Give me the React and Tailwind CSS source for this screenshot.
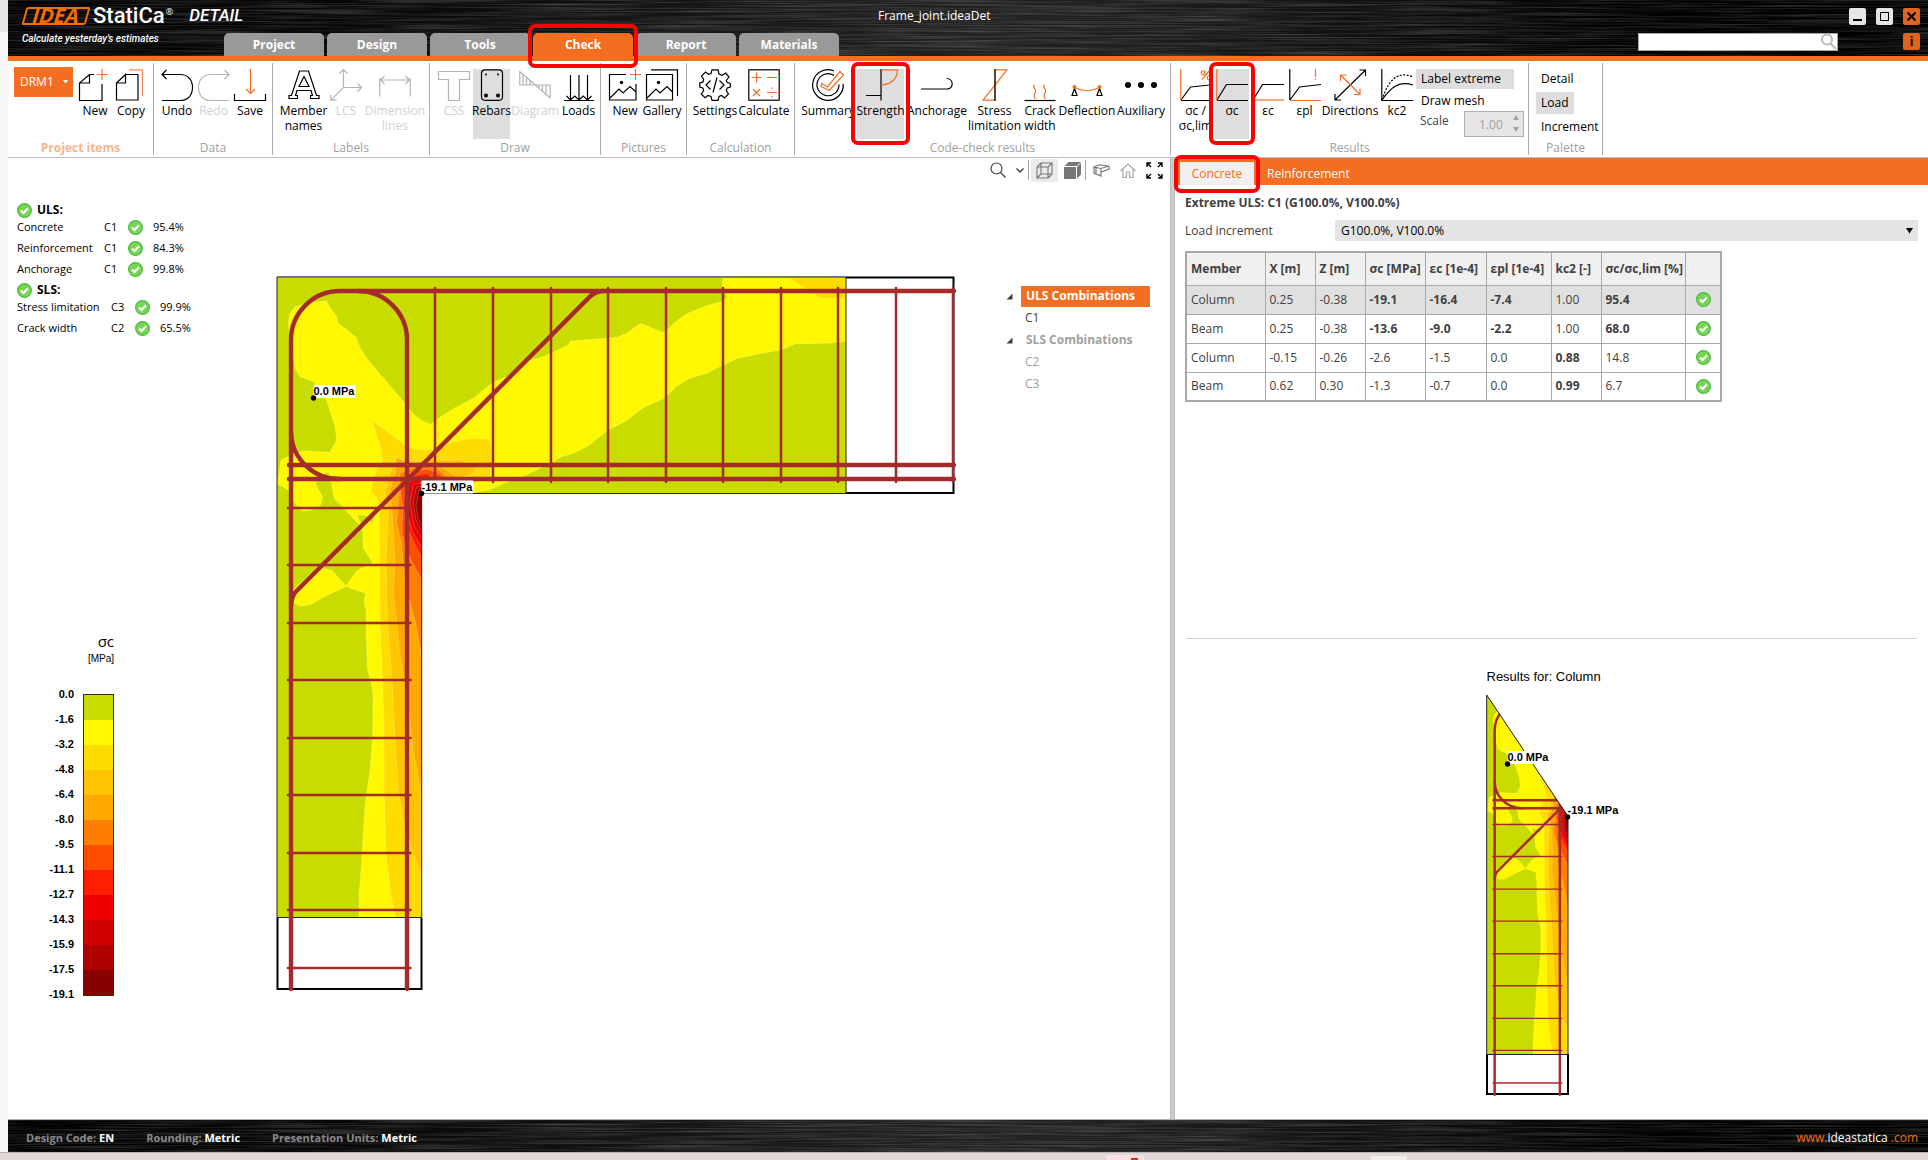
import React, { useState } from 'react';

const STRESS_SCALE = [
  { value: '-1.6', color: '#c8dc00' },
  { value: '-3.2', color: '#fff800' },
  { value: '-4.8', color: '#ffdc00' },
  { value: '-6.4', color: '#ffc400' },
  { value: '-8.0', color: '#ffa800' },
  { value: '-9.5', color: '#ff7d00' },
  { value: '-11.1', color: '#ff4d00' },
  { value: '-12.7', color: '#ff1e00' },
  { value: '-14.3', color: '#f20000' },
  { value: '-15.9', color: '#d00000' },
  { value: '-17.5', color: '#b00000' },
  { value: '-19.1', color: '#880000' },
];

// Contour bands of the stress field, drawn on a grid three times finer than the model
const BANDS = [
  {
    color: '#fff800',
    points:
      '85,185 90,160 105,140 150,128 200,122 205,135 230,170 233,188 262,210 288,232 300,262 320,295 380,365 435,430 460,462 485,482 512,493 540,472 585,443 640,415 700,366 740,350 780,320 805,303 850,290 925,255 932,243 1000,238 1070,232 1100,220 1142,190 1207,217 1217,215 1243,188 1279,162 1336,138 1383,125 1403,113 1398,100 1386,80 1390,50 1757,50 1757,245 1703,250 1605,252 1563,270 1481,285 1434,295 1383,318 1341,340 1290,355 1248,380 1217,413 1150,443 1095,485 1045,510 985,557 940,580 905,590 870,610 800,645 720,675 690,690 640,698 485,700 485,1973 297,1973 297,1906 305,1803 315,1638 320,1597 330,1535 338,1431 339,1307 335,1276 322,1225 318,1121 318,1050 312,1025 316,1000 258,980 190,1012 150,1035 120,1038 103,1030 98,990 125,965 170,922 215,930 258,978 290,932 338,908 310,865 308,805 270,765 222,715 213,660 205,635 170,650 168,675 188,710 182,735 150,752 125,752 100,725 85,690 53,672 62,600 95,585 130,572 210,577 230,540 225,500 200,420 160,365 120,350 105,325 100,290 90,250',
  },
  { color: '#c8dc00', points: '292,764 345,770 335,790 320,782 300,788' },
  {
    color: '#ffdc00',
    points:
      '338,482 400,528 435,555 470,570 540,565 570,550 625,535 680,537 692,545 694,600 690,650 640,672 485,700 485,1973 407,1973 392,1906 378,1783 372,1597 372,1390 367,1256 360,1080 357,750 350,712 332,695 345,640 368,600 360,555 350,530',
  },
  { color: '#ffdc00', points: '1581,50 1682,115 1757,116 1757,50' },
  {
    color: '#ffc400',
    points:
      '410,592 440,603 500,600 600,600 640,615 650,633 625,648 485,700 485,1845 460,1783 435,1700 415,1597 405,1431 395,1235 382,1080 378,900 385,760 375,695 395,625',
  },
  {
    color: '#ffa800',
    points:
      '410,592 440,610 485,606 540,617 590,650 485,700 485,1607 460,1473 445,1338 420,1183 410,1080 400,1000 405,900 398,780 390,690 405,640',
  },
  {
    color: '#ff7d00',
    points:
      '420,640 440,630 480,616 530,625 560,650 485,700 485,1190 465,1080 440,990 430,910 425,850 410,790 418,690',
  },
  { color: '#ff4d00', points: '430,650 470,632 500,628 530,636 550,652 485,700 485,960 448,890 426,820 428,740 422,700' },
  { color: '#ff1e00', points: '440,660 470,645 500,640 520,655 485,700 485,895 460,845 436,790 430,730' },
  { color: '#f20000', points: '447,665 480,655 485,700 485,862 455,810 437,735' },
  { color: '#d00000', points: '460,672 485,670 485,835 462,795 450,730' },
  { color: '#b00000', points: '470,680 485,680 485,815 468,780 459,730' },
  { color: '#880000', points: '478,690 485,690 485,795 475,775 468,735' },
];

const BEAM_STIRRUPS = [435, 493, 551, 608, 666, 723, 781, 838, 896, 953];
const COLUMN_STIRRUPS = [508, 565, 623, 680, 738, 795, 853, 910, 968];

const CHECKS = [
  {
    name: 'ULS:',
    grid: 'grid-cols-[87px_24px_25px_1fr]',
    rows: [
      ['Concrete', 'C1', '95.4%'],
      ['Reinforcement', 'C1', '84.3%'],
      ['Anchorage', 'C1', '99.8%'],
    ],
  },
  {
    name: 'SLS:',
    grid: 'grid-cols-[94px_24px_25px_1fr]',
    rows: [
      ['Stress limitation', 'C3', '99.9%'],
      ['Crack width', 'C2', '65.5%'],
    ],
  },
];

const COLUMNS = [
  { label: 'Member', width: 'w-[79px]' },
  { label: 'X [m]', width: 'w-[50px]' },
  { label: 'Z [m]', width: 'w-[50px]' },
  { label: 'σc [MPa]', width: 'w-[60px]' },
  { label: 'εc [1e-4]', width: 'w-[61px]' },
  { label: 'εpl [1e-4]', width: 'w-[65px]' },
  { label: 'kc2 [-]', width: 'w-[50px]' },
  { label: 'σc/σc,lim [%]', width: 'w-[84px]' },
];

const RESULTS = [
  { cells: ['Column', '0.25', '-0.38', '-19.1', '-16.4', '-7.4', '1.00', '95.4'], bold: [3, 4, 5, 7] },
  { cells: ['Beam', '0.25', '-0.38', '-13.6', '-9.0', '-2.2', '1.00', '68.0'], bold: [3, 4, 5, 7] },
  { cells: ['Column', '-0.15', '-0.26', '-2.6', '-1.5', '0.0', '0.88', '14.8'], bold: [6] },
  { cells: ['Beam', '0.62', '0.30', '-1.3', '-0.7', '0.0', '0.99', '6.7'], bold: [6] },
];

const ORANGE = '#f36e21';

function Brushed({ id }) {
  return (
    <svg className="absolute inset-0 w-full h-full" preserveAspectRatio="none" aria-hidden="true">
      <defs>
        <filter id={id} x="0" y="0" width="100%" height="100%">
          <feTurbulence type="fractalNoise" baseFrequency="0.008 0.7" numOctaves="3" seed="4" />
          <feColorMatrix values="0 0 0 0 1  0 0 0 0 1  0 0 0 0 1  1.6 0 0 0 -0.6" />
        </filter>
        <linearGradient id={`${id}-shade`}>
          <stop offset="0" stopColor="#000" />
          <stop offset="0.25" stopColor="#0c0c0c" />
          <stop offset="0.5" stopColor="#222" />
          <stop offset="0.62" stopColor="#1a1a1a" />
          <stop offset="0.85" stopColor="#000" />
        </linearGradient>
      </defs>
      <rect width="100%" height="100%" fill={`url(#${id}-shade)`} />
      <rect width="100%" height="100%" filter={`url(#${id})`} opacity="0.25" />
    </svg>
  );
}

function CheckBadge() {
  return (
    <svg width="15" height="15" viewBox="0 0 15 15" fill="none" className="block shrink-0">
      <circle cx="7.5" cy="7.5" r="6.9" fill="#76d552" stroke="#4fb948" strokeWidth="1.2" />
      <path d="M4 7.6 6.6 10 11 5.2" stroke="#fff" strokeWidth="2.2" />
    </svg>
  );
}

function Highlight({ className }) {
  return <span className={`absolute border-4 border-[#ff0000] rounded-[7px] z-20 pointer-events-none ${className}`} />;
}

function Icon({ children, color = '#000' }) {
  return (
    <svg
      width="32"
      height="32"
      viewBox="0 0 32 32"
      fill="none"
      stroke={color}
      strokeWidth="1.2"
      className="block shrink-0 overflow-visible"
      aria-hidden="true"
    >
      {children}
    </svg>
  );
}

const GREY = '#b4b4b4';

const icons = {
  newItem: (
    <Icon>
      <path d="M15 5.500H10.500L.5 14V31.500H23V15M10.500 5.500V14H.5" />
      <path d="M23 0V11M17.500 5.500H28.500" stroke={ORANGE} />
    </Icon>
  ),
  copy: (
    <Icon>
      <path d="M10.500 5.500H23V31H1.500V14L10.500 5.500V14H1.500" />
      <path d="M14 .8H27.500V27" stroke="#f58f55" />
    </Icon>
  ),
  undo: (
    <Icon>
      <path d="M1 5.500H19C27 5.500 31.500 11 31.500 18.500S27 31.500 19 31.500H1M5.500 1 1 5.500 5.500 10" />
    </Icon>
  ),
  redo: (
    <Icon color={GREY}>
      <path d="M31 5.500H13C5 5.500 .5 11 .5 18.500S5 31.500 13 31.500H31M26.500 1 31 5.500 26.500 10" />
    </Icon>
  ),
  save: (
    <Icon>
      <path d="M.5 25V31.500H31.500V25" />
      <path d="M16.500 0V24.500M12 20 16.500 24.500 21 20" stroke={ORANGE} />
    </Icon>
  ),
  member: (
    <Icon>
      <path d="M1 29.500V26.500H3.500L11.500 2H20.500L28.500 26.500H31V29.500H22.500V26.500H24.500L23 21.500H9L7.500 26.500H9.500V29.500ZM11 17.500H21L16 7.500Z" />
    </Icon>
  ),
  lcs: (
    <Icon color={GREY}>
      <path d="M13.500 .5V18.500H31.500M13.500 18.500 .8 31.200M9.500 4.500 13.500 .5 17.500 4.500M27.500 14.500 31.500 18.500 27.500 22.500M.8 26V31.200H6.500" />
    </Icon>
  ),
  dimension: (
    <Icon color={GREY}>
      <path d="M.8 9V27.500M31.200 9V27.500M1.500 11H30.500M5.500 7 1.500 11 5.500 15M26.500 7 30.500 11 26.500 15" />
    </Icon>
  ),
  css: (
    <Icon color={GREY}>
      <path d="M.5 2.500H31.500V10.500H21.500V31.500H10.500V10.500H.5Z" />
    </Icon>
  ),
  rebars: (
    <Icon>
      <rect x="5.500" y=".8" width="21" height="30.500" rx="3.500" />
      <g fill="#000" stroke="none">
        <circle cx="10" cy="5.500" r="1" />
        <circle cx="22" cy="5.500" r="1" />
        <circle cx="10" cy="26.500" r="2" />
        <circle cx="22" cy="26.500" r="2" />
      </g>
    </Icon>
  ),
  diagram: (
    <Icon color={GREY}>
      <path d="M.8 16V2.500L31.200 29V16ZM4 6V16M7.500 9V16M11 12V16M20 16V19M23.500 16V22M27 16V25" />
    </Icon>
  ),
  loads: (
    <Icon>
      <path d="M1 31.500H31M7.500 6V31M16 6V31M24.500 6V31M3.500 27 7.500 31 11.700 27 16 31 20.200 27 24.500 31 28.500 27" />
    </Icon>
  ),
  picture: (
    <Icon>
      <path d="M17 5.500H.5V31H27V15M.5 29.500 10 20 14 24 21 17.500 27 23" />
      <circle cx="12.500" cy="13.500" r="1.700" fill="#000" stroke="none" />
      <path d="M26.500 0V11M21 5.500H32" stroke={ORANGE} />
    </Icon>
  ),
  gallery: (
    <Icon>
      <path d="M.5 5.500H26.500V31H.5ZM5 .8H31.500V27M.5 29.500 10 20 14 24 21 17.500 26.500 23" />
      <circle cx="12.500" cy="13.500" r="1.700" fill="#000" stroke="none" />
    </Icon>
  ),
  settings: (
    <Icon>
      <path d="M13 .8H19L20 5 23 6.300 26.700 4 30 8 27.300 11.500 28.200 13.500 31.300 14.500V18L28.200 19 27.300 21.500 29.500 25 25.500 29 22.500 26.500 20 27.500 19 31.300H13L12 27.500 9 26.500 6 28.700 2.300 25 4.700 21.500 3.800 19 .8 18V14L3.800 13.200 4.700 10.500 2.500 7 6.500 3 9.500 5.300 12 4.500Z" />
      <path d="M11.500 11.500 7 16 11.500 20.500M20.500 11.500 25 16 20.500 20.500M18 8.500 14 23.500" />
    </Icon>
  ),
  calculate: (
    <Icon>
      <rect x=".8" y=".8" width="30.400" height="30.400" />
      <path
        d="M3.500 8.500H13.500M8.500 3.500V13.500M19 8.500H29M5 20 12 27M12 20 5 27M19 23.500H29M24 18.500V20M24 27V28.500"
        stroke={ORANGE}
      />
    </Icon>
  ),
  summary: (
    <Icon>
      <path d="M22 2A15.300 15.300 0 1 0 31.200 15M22 6.500A11 11 0 1 0 27 15.500" />
      <path d="M9.500 14.500 15.500 18 28 2.500 31.500 6 17 21.500 9 17.500Z" stroke={ORANGE} />
    </Icon>
  ),
  strength: (
    <Icon>
      <path d="M16 0V31.500M1 26.500H16" stroke="#000" />
      <path d="M16.500 .8H32.500C32.500 9 27 15.500 16.500 16" stroke={ORANGE} />
    </Icon>
  ),
  anchorage: (
    <Icon>
      <path d="M0 20H26C33 20 33 9.500 25.500 9.500" />
    </Icon>
  ),
  stress: (
    <Icon>
      <path d="M28 .8 4 31.200H16V.8Z" stroke={ORANGE} />
      <path d="M16 0V32" />
    </Icon>
  ),
  crack: (
    <Icon>
      <path d="M.5 31.500H31.500" />
      <path
        d="M10.500 16C7.500 19 13 20 11.500 23S9.500 27 11.500 30M20.500 16C17.500 19 23 20 21.500 23S19.500 27 21.500 30"
        stroke={ORANGE}
      />
    </Icon>
  ),
  deflection: (
    <Icon>
      <path d="M3.500 19.500 1 26.500H6ZM28.500 19.500 26 26.500H31Z" />
      <path d="M3.500 18.500Q16 25 28.500 18.500" stroke={ORANGE} />
      <circle cx="3.500" cy="18" r="2" fill={ORANGE} stroke="none" />
      <circle cx="28.500" cy="18" r="2" fill={ORANGE} stroke="none" />
    </Icon>
  ),
  auxiliary: (
    <Icon>
      <g fill="#000" stroke="none">
        <circle cx="3" cy="16" r="3" />
        <circle cx="16" cy="16" r="3" />
        <circle cx="29" cy="16" r="3" />
      </g>
    </Icon>
  ),
  stressRatio: (
    <Icon>
      <path d="M1 31 10.500 18 30 16M1 31.500H31" />
      <path d="M.8 0V31.500" stroke={ORANGE} />
      <path d="M30 1 22 10.500M23 1.500A1.800 2.200 0 1 0 23.100 1.500M29 6.500A1.800 2.200 0 1 0 29.100 6.500" stroke={ORANGE} />
    </Icon>
  ),
  stressCurve: (
    <Icon>
      <path d="M1 31 10.500 15.500H32M1 31.500H32" />
      <path d="M.8 0V31.500" stroke={ORANGE} />
    </Icon>
  ),
  strainCurve: (
    <Icon>
      <path d="M1 31 10.500 15.500H32" />
      <path d="M.5 31H32" stroke="#f9a780" strokeWidth="2" />
    </Icon>
  ),
  plasticStrain: (
    <Icon>
      <path d="M.8 0V31M1 31 10.500 18 32 15.500" />
      <path d="M1 31.500H32M26.500 0V8M26.500 9.500V11" stroke={ORANGE} />
    </Icon>
  ),
  directions: (
    <Icon>
      <path d="M1 31 31.500 1M25.500 1H31.500V7M1 25V31H7" />
      <path d="M6.500 6 26 25.500M6.500 12V6H12.500M26 19.500V25.500H20" stroke={ORANGE} />
    </Icon>
  ),
  kc2: (
    <Icon>
      <path d="M.8 0V31.500H32M1 31C10 18 18 11.500 32 16" />
      <path d="M1 31C7 12 16 1 32 8" strokeDasharray="2 1.500" />
    </Icon>
  ),
};

function Tool({ icon, label, width, active, disabled, marked }) {
  return (
    <button
      disabled={disabled}
      className={`relative flex flex-col items-center shrink-0 h-[70px] leading-[15px] ${width} ${
        active ? 'bg-[#dedede] ml-px z-10' : ''
      } ${disabled ? 'text-[#cfcfcf]' : 'text-black'}`}
    >
      {icons[icon]}
      <span className="mt-[2px] text-center whitespace-pre">{label}</span>
      {marked && <Highlight className="-inset-x-[6px] -top-[7px] -bottom-[6px]" />}
    </button>
  );
}

function ToolGroup({ name, width, padding, bold, children }) {
  return (
    <section className={`flex flex-col justify-between shrink-0 border-r border-[#ababab] h-[92px] pt-[6px] ${width}`}>
      <div className={`flex items-start ${padding}`}>{children}</div>
      <h2 className={`text-center leading-[14px] ${bold ? 'font-bold text-[#f8b48e]' : 'text-[#a0a0a0]'}`}>{name}</h2>
    </section>
  );
}

function Header() {
  const [tab, setTab] = useState('Check');
  const tabs = ['Project', 'Design', 'Tools', 'Check', 'Report', 'Materials'];

  return (
    <header className="relative h-[61px] border-b-[5px] border-[#f36e21] bg-black">
      <Brushed id="brushed-top" />
      <div className="relative grid grid-cols-[215px_1fr_290px] h-full">
        <div className="pl-[14px] pt-[6px] text-white">
          <div className="flex items-center h-[20px] whitespace-nowrap">
            <span className="flex items-center justify-center shrink-0 w-[64px] h-[18px] ml-[2px] mr-[5px] -skew-x-[16deg] border-2 border-[#f36e00] rounded-[2px] font-['Open_Sans',sans-serif] text-[20px] leading-[16px] font-bold text-[#f36e00]">
              IDEA
            </span>
            <span className="shrink-0 font-['Roboto',sans-serif] font-medium text-[22px] leading-[20px]">StatiCa</span>
            <span className="shrink-0 self-start ml-px text-[9px] leading-[12px]">®</span>
            <span className="shrink-0 ml-[16px] font-['Roboto',sans-serif] italic font-medium text-[17px]">DETAIL</span>
          </div>
          <p className="mt-[6px] font-['Roboto',sans-serif] italic font-medium text-[10px] leading-[14px] whitespace-nowrap">
            Calculate yesterday's estimates
          </p>
        </div>

        <div className="flex flex-col justify-between">
          <h1 className="pt-[8px] pl-[655px] text-white leading-[16px] whitespace-nowrap">Frame_joint.ideaDet</h1>
          <nav className="flex gap-[3px] pl-px">
            {tabs.map((name) => (
              <button
                key={name}
                onClick={() => setTab(name)}
                className={`relative w-[100px] h-[23px] rounded-t-[5px] text-white font-bold ${
                  tab === name ? 'bg-[#f36e21]' : 'bg-[#999999]'
                }`}
              >
                {name}
                {name === 'Check' && <Highlight className="-inset-x-[5px] -top-[9px] -bottom-[12px]" />}
              </button>
            ))}
          </nav>
        </div>

        <div className="flex flex-col items-end gap-[8px] pt-[8px] pr-[8px]">
          <div className="flex gap-[10px]">
            <button aria-label="Minimize" className="w-[17px] h-[17px] rounded-[2px] bg-[#e6e6e6] flex items-end justify-center pb-[4px]">
              <span className="w-[9px] h-[2px] bg-black" />
            </button>
            <button aria-label="Maximize" className="w-[17px] h-[17px] rounded-[2px] bg-[#e6e6e6] flex items-center justify-center">
              <span className="w-[9px] h-[9px] border border-black" />
            </button>
            <button aria-label="Close" className="w-[17px] h-[17px] rounded-[2px] bg-[#df6420] flex items-center justify-center">
              <svg width="9" height="9" viewBox="0 0 9 9" stroke="#000" strokeWidth="2">
                <path d="M.5.5 8.500 8.500M8.500.5.5 8.500" />
              </svg>
            </button>
          </div>
          <div className="flex gap-[65px]">
            <label className="relative block">
              <input
                type="text"
                aria-label="Search"
                className="block w-[200px] h-[18px] bg-white border border-[#a8a8b0] pl-1 pr-5 text-black"
              />
              <svg
                width="17"
                height="17"
                viewBox="0 0 17 17"
                fill="none"
                stroke="#bdbdbd"
                strokeWidth="2.200"
                className="absolute right-px top-0"
              >
                <circle cx="7" cy="6.500" r="5" />
                <path d="M10.500 10.500 16 16" />
              </svg>
            </label>
            <button aria-label="Info" className="w-[17px] h-[17px] rounded-[2px] bg-[#df6420] text-black font-bold leading-[16px]">
              i
            </button>
          </div>
        </div>
      </div>
    </header>
  );
}

function Ribbon() {
  const [labelExtreme, setLabelExtreme] = useState(true);
  return (
    <div className="flex h-[97px] pt-[2px] bg-white border-b border-[#c0c0c0]">
      <ToolGroup name="Project items" width="w-[146px]" padding="pl-[6px]" bold>
        <button className="flex items-center justify-between w-[59px] h-[30px] -mt-[2px] pl-[6px] pr-[5px] mr-[4px] bg-[#f36e21] text-white">
          DRM1
          <svg width="5" height="4" viewBox="0 0 5 4" fill="#fff">
            <path d="M0 0H5L2.500 3.500Z" />
          </svg>
        </button>
        <Tool icon="newItem" label="New" width="w-[36px]" />
        <Tool icon="copy" label="Copy" width="w-[36px]" />
      </ToolGroup>

      <ToolGroup name="Data" width="w-[119px]" padding="pl-[5px]">
        <Tool icon="undo" label="Undo" width="w-[36px]" />
        <Tool icon="redo" label="Redo" width="w-[37px]" disabled />
        <Tool icon="save" label="Save" width="w-[36px]" />
      </ToolGroup>

      <ToolGroup name="Labels" width="w-[157px]" padding="pl-[6px]">
        <Tool icon="member" label={'Member\nnames'} width="w-[49px]" />
        <Tool icon="lcs" label="LCS" width="w-[36px]" disabled />
        <Tool icon="dimension" label={'Dimension\nlines'} width="w-[62px]" disabled />
      </ToolGroup>

      <ToolGroup name="Draw" width="w-[171px]" padding="pl-[6px]">
        <Tool icon="css" label="CSS" width="w-[36px]" disabled />
        <Tool icon="rebars" label="Rebars" width="w-[37px]" active />
        <Tool icon="diagram" label="Diagram" width="w-[50px]" disabled />
        <Tool icon="loads" label="Loads" width="w-[37px]" />
      </ToolGroup>

      <ToolGroup name="Pictures" width="w-[86px]" padding="pl-[6px]">
        <Tool icon="picture" label="New" width="w-[36px]" />
        <Tool icon="gallery" label="Gallery" width="w-[38px]" />
      </ToolGroup>

      <ToolGroup name="Calculation" width="w-[108px]" padding="pl-[3px]">
        <Tool icon="settings" label="Settings" width="w-[50px]" />
        <Tool icon="calculate" label="Calculate" width="w-[48px]" />
      </ToolGroup>

      <ToolGroup name="Code-check results" width="w-[376px]" padding="pl-[5px]">
        <Tool icon="summary" label="Summary" width="w-[56px]" />
        <Tool icon="strength" label="Strength" width="w-[47px]" active marked />
        <Tool icon="anchorage" label="Anchorage" width="w-[66px]" />
        <Tool icon="stress" label={'Stress\nlimitation'} width="w-[49px]" />
        <Tool icon="crack" label={'Crack\nwidth'} width="w-[42px]" />
        <Tool icon="deflection" label="Deflection" width="w-[52px]" />
        <Tool icon="auxiliary" label="Auxiliary" width="w-[56px]" />
      </ToolGroup>

      <ToolGroup name="Results" width="w-[358px]" padding="pl-[6px]">
        <Tool icon="stressRatio" label={'σc /\nσc,lim'} width="w-[37px]" />
        <Tool icon="stressCurve" label="σc" width="w-[34px]" active marked />
        <Tool icon="strainCurve" label="εc" width="w-[38px]" />
        <Tool icon="plasticStrain" label="εpl" width="w-[35px]" />
        <Tool icon="directions" label="Directions" width="w-[56px]" />
        <Tool icon="kc2" label="kc2" width="w-[38px]" />
        <div className="flex flex-col items-start w-[108px]">
          <button
            onClick={() => setLabelExtreme(!labelExtreme)}
            className={`w-[98px] h-[20px] pl-[5px] text-left text-black ${labelExtreme ? 'bg-[#dedede]' : ''}`}
          >
            Label extreme
          </button>
          <button className="h-[20px] mt-[2px] pl-[5px] text-left text-black">Draw mesh</button>
          <div className="flex justify-between w-full pl-[4px]">
            <label htmlFor="scale" className="leading-[20px] text-[#444444]">
              Scale
            </label>
            <span className="relative">
              <input
                id="scale"
                disabled
                defaultValue="1.00"
                className="block w-[60px] h-[26px] border border-[#b0b0b0] bg-[#e6e6e6] pl-[14px] text-[#a0a0a0]"
              />
              <svg width="6" height="18" viewBox="0 0 6 18" fill="#a0a0a0" className="absolute right-[5px] top-[4px]">
                <path d="M3 0 6 5H0ZM3 17 0 12H6Z" />
              </svg>
            </span>
          </div>
        </div>
      </ToolGroup>

      <ToolGroup name="Palette" width="w-[74px]" padding="pl-[7px]">
        <div className="flex flex-col items-start gap-[2px] -mt-px text-black">
          <button className="h-[22px] px-[5px]">Detail</button>
          <button className="h-[22px] px-[5px] bg-[#dedede]">Load</button>
          <button className="h-[22px] px-[5px]">Increment</button>
        </div>
      </ToolGroup>
    </div>
  );
}

function ViewToolbar() {
  return (
    <div className="flex items-center justify-end h-[24px] pr-[7px] text-[#777777]">
      <button aria-label="Zoom" className="flex items-center gap-[10px] mr-[4px]">
        <svg width="16" height="16" viewBox="0 0 16 16" fill="none" stroke="#444" strokeWidth="1.200">
          <circle cx="6.500" cy="6.500" r="5.500" />
          <path d="M10.500 10.500 15.500 15.500" />
        </svg>
        <svg width="8" height="5" viewBox="0 0 8 5" fill="none" stroke="#444" strokeWidth="1.500">
          <path d="M.5.5 4 4 7.500.5" />
        </svg>
      </button>
      <span className="w-px h-[20px] bg-[#a8a8a8] mr-[2px]" />
      <button aria-label="Wireframe view" className="flex items-center justify-center w-[27px] h-[23px] bg-[#ebebeb] mr-[6px]">
        <svg width="17" height="17" viewBox="0 0 17 17" fill="none" stroke="#777" strokeWidth="1.100">
          <path d="M1 5H12V16H1ZM5 1H16V12H5ZM1 5 5 1M12 5 16 1M12 16 16 12M1 16 5 12" />
        </svg>
      </button>
      <button aria-label="Solid view" className="mr-[4px]">
        <svg width="17" height="17" viewBox="0 0 17 17" fill="#777">
          <path d="M0 5H12V17H0ZM.5 4 4.500 0H17L13 4ZM13 5 17 1V12.500L13 16.500Z" />
        </svg>
      </button>
      <span className="w-px h-[20px] bg-[#a8a8a8] mr-[7px]" />
      <button aria-label="Perspective" className="mr-[10px]">
        <svg width="17" height="13" viewBox="0 0 17 13" fill="none" stroke="#777" strokeWidth="1.200">
          <path d="M1 3 6 .8 16 2 8 4.500ZM1 3V9L8 12V4.500M8 8 16 5V2M3 4V10" />
        </svg>
      </button>
      <button aria-label="Home" className="mr-[10px]">
        <svg width="16" height="15" viewBox="0 0 16 15" fill="none" stroke="#aaa" strokeWidth="1.200">
          <path d="M.5 8 8 1 15.500 8M3 6V14.300H6.500V9H9.500V14.300H13V6" />
        </svg>
      </button>
      <button aria-label="Fit to screen">
        <svg width="17" height="17" viewBox="0 0 17 17" fill="none" stroke="#000" strokeWidth="1.400">
          <path d="M1 5V1H5M12 1H16V5M16 12V16H12M5 16H1V12M1 1 5 5M16 1 12 5M16 16 12 12M1 16 5 12" />
        </svg>
      </button>
    </div>
  );
}

function CheckSummary() {
  return (
    <div className="flex flex-col gap-[3px] pl-[9px] pt-[21px] text-[11px] text-black">
      {CHECKS.map((group) => (
        <div key={group.name}>
          <div className="flex items-center gap-[5px] h-[14px] text-[12px] font-bold">
            <CheckBadge />
            {group.name}
          </div>
          {group.rows.map(([name, combination, ratio]) => (
            <div key={name} className={`grid items-center h-[21px] whitespace-nowrap ${group.grid}`}>
              <span>{name}</span>
              <span>{combination}</span>
              <CheckBadge />
              <span>{ratio}</span>
            </div>
          ))}
        </div>
      ))}
    </div>
  );
}

function StressLegend() {
  return (
    <div className="w-[106px] mt-[290px] flex flex-col items-end">
      <div className="text-[15px] leading-[24px] text-black">σc</div>
      <div className="font-['Liberation_Sans',sans-serif] text-[10px] leading-[12px] text-black">[MPa]</div>
      <div className="flex gap-[9px] mt-[17px] font-['Liberation_Sans',sans-serif] font-bold text-[11px] text-black">
        <div className="flex flex-col text-right">
          <span className="h-[25px] leading-[25px]">0.0</span>
          {STRESS_SCALE.map((step) => (
            <span key={step.value} className="h-[25px] leading-[25px]">
              {step.value}
            </span>
          ))}
        </div>
        <div className="my-[12px] border border-[#333300]">
          {STRESS_SCALE.map((step) => (
            <div key={step.value} className="w-[29px] h-[25px]" style={{ backgroundColor: step.color }} />
          ))}
        </div>
      </div>
    </div>
  );
}

function StressField() {
  return (
    <g>
      <path d="M277 277H846V493.500H421.700V917.500H277Z" fill="#c8dc00" />
      <g transform="translate(260 260) scale(0.3333)" stroke="#fff" strokeOpacity="0.4" strokeWidth="1.600">
        {BANDS.map((band, i) => (
          <polygon key={i} points={band.points} fill={band.color} />
        ))}
      </g>
    </g>
  );
}

function Rebars() {
  return (
    <g fill="none" stroke="#a52a2a" strokeLinecap="round">
      <g strokeWidth="2.500">
        {COLUMN_STIRRUPS.map((y) => (
          <path key={y} d={`M288 ${y}H410.500`} />
        ))}
      </g>
      <g strokeWidth="4.400">
        <path d="M291 989V340A49 49 0 0 1 340 291H954" />
        <path d="M358 291A49 49 0 0 1 407 340V989" />
        <path d="M291 432A48 48 0 0 0 340 479" />
        <path d="M289 465H954M289 479H954" />
        <path d="M291 606Q291.500 596 296 591.500L589.500 297Q595 291.500 603 291" />
      </g>
    </g>
  );
}

function Probe({ x, y, value, width, plain }) {
  return (
    <g>
      {!plain && <rect x={x} y={y - 13} width={width} height="13" rx="1" fill="#fff" />}
      <circle cx={x} cy={y} r="2.700" fill="#000" />
      <text x={x} y={y - 3} className="font-['Liberation_Sans',sans-serif] font-bold text-[11px]">
        {value} MPa
      </text>
    </g>
  );
}

function ModelCanvas() {
  return (
    <svg viewBox="270 270 690 726" className="block w-full" role="img" aria-label="Concrete stress in the frame joint">
      <g fill="none" stroke="#000" strokeWidth="2">
        <path d="M846 277.500H953.500V493H846M277.500 917.500V989H421.500V917.500" />
      </g>
      <StressField />
      <path d="M277 277H846" stroke="#777" strokeWidth="2" />
      <path d="M277 277V917.500H421.700V493.500H846V277" fill="none" stroke="#222" />
      <g stroke="#a52a2a" strokeWidth="2.500" strokeLinecap="round">
        {BEAM_STIRRUPS.map((x) => (
          <path key={x} d={`M${x} 288V482`} />
        ))}
      </g>
      <Rebars />
      <Probe x={313.5} y={398} value="0.0" width={42} />
      <Probe x={421.5} y={493.5} value="-19.1" width={52} />
    </svg>
  );
}

function ColumnCanvas() {
  return (
    <svg width="142" height="410" viewBox="1480 690 142 410" className="block" role="img" aria-label="Results for column">
      <defs>
        <clipPath id="column-cut">
          <path d="M270 277H277L421.700 493.500V1000H270Z" />
        </clipPath>
      </defs>
      <path d="M1486 1054V1094H1567V1054" fill="none" stroke="#000" strokeWidth="2" />
      <g transform="translate(1330.100 539) scale(0.562)" clipPath="url(#column-cut)">
        <StressField />
        <Rebars />
      </g>
      <path d="M1485.700 1054.500V695L1567 816.500V1054.500Z" fill="none" stroke="#222" />
      <Probe x={1506.500} y={764} value="0.0" width={42} />
      <Probe x={1566.500} y={817} value="-19.1" plain />
    </svg>
  );
}

function CombinationTree() {
  const groups = [
    { name: 'ULS Combinations', items: ['C1'], active: true },
    { name: 'SLS Combinations', items: ['C2', 'C3'] },
  ];
  return (
    <ul className="w-[210px] shrink-0 pl-[46px] pt-[103px]">
      {groups.map((group) => (
        <li key={group.name}>
          <div className="flex items-center gap-[8px] h-[22px]">
            <svg width="7" height="7" viewBox="0 0 7 7" fill="#404040">
              <path d="M6.500 .5V6.500H.5Z" />
            </svg>
            <button
              className={`w-[129px] h-[21px] pl-[5px] text-left font-bold whitespace-nowrap ${
                group.active ? 'bg-[#f36e21] text-white' : 'text-[#a0a0a0]'
              }`}
            >
              {group.name}
            </button>
          </div>
          <ul>
            {group.items.map((item) => (
              <li key={item} className="h-[22px] pl-[19px]">
                <button className={`leading-[22px] ${group.active ? 'text-[#404040]' : 'text-[#a0a0a0]'}`}>{item}</button>
              </li>
            ))}
          </ul>
        </li>
      ))}
    </ul>
  );
}

function ResultsPanel() {
  return (
    <section className="flex flex-col bg-white text-[#404040] min-w-0">
      <nav className="flex items-end h-[27px] bg-[#f36e21]">
        <button className="relative w-[74px] h-[23px] ml-[5px] bg-[#f0f0f0] text-[#f36e21]">
          Concrete
          <Highlight className="-inset-x-[6px] -top-[7px] -bottom-[8px]" />
        </button>
        <button className="h-[23px] px-[13px] text-white">Reinforcement</button>
      </nav>

      <div className="px-[10px]">
        <h3 className="mt-[10px] font-bold leading-[16px]">Extreme ULS: C1 (G100.0%, V100.0%)</h3>
        <div className="flex items-center mt-[9px]">
          <label htmlFor="increment" className="w-[150px] shrink-0">
            Load increment
          </label>
          <div className="relative flex-1">
            <select id="increment" className="block appearance-none w-full h-[21px] pl-[6px] bg-[#e4e4e4] text-black">
              <option>G100.0%, V100.0%</option>
            </select>
            <svg width="7" height="6" viewBox="0 0 7 6" className="absolute right-[5px] top-[8px]">
              <path d="M0 0H7L3.500 5.500Z" />
            </svg>
          </div>
        </div>

        <table className="mt-[10px] w-[537px] table-fixed border-collapse border-2 border-[#a8a8a8] whitespace-nowrap">
          <thead>
            <tr className="h-[33px] bg-[#f0f0f0] text-left">
              {COLUMNS.map((column) => (
                <th key={column.label} className={`border border-[#a8a8a8] pl-[4px] ${column.width}`}>
                  {column.label}
                </th>
              ))}
              <th className="border border-[#a8a8a8]" aria-label="Status" />
            </tr>
          </thead>
          <tbody>
            {RESULTS.map((row, r) => (
              <tr key={r} className={`h-[29px] ${r === 0 ? 'bg-[#e0e0e0]' : ''}`}>
                {row.cells.map((cell, c) => (
                  <td key={c} className={`border border-[#a8a8a8] pl-[4px] ${row.bold.includes(c) ? 'font-bold' : ''}`}>
                    {cell}
                  </td>
                ))}
                <td className="border border-[#a8a8a8] pl-[10px]">
                  <CheckBadge />
                </td>
              </tr>
            ))}
          </tbody>
        </table>
      </div>

      <div className="flex flex-col items-center mt-[236px] mx-[11px] pt-[30px] border-t border-[#d0d0d0]">
        <div className="w-[142px]">
          <h3 className="pl-[6px] mb-[5px] font-['Liberation_Sans',sans-serif] text-[13px] leading-[16px] text-black whitespace-nowrap">
            Results for: Column
          </h3>
          <ColumnCanvas />
        </div>
      </div>
    </section>
  );
}

function StatusBar() {
  return (
    <footer className="relative h-[33px] border-t border-[#b0b0b0] bg-black font-bold">
      <Brushed id="brushed-bottom" />
      <div className="relative flex items-center h-full pt-[4px] pl-[18px] pr-[10px] gap-[32px] text-[11px] text-[#8a8a8a]">
        <span>
          Design Code: <span className="text-white">EN</span>
        </span>
        <span>
          Rounding: <span className="text-white">Metric</span>
        </span>
        <span>
          Presentation Units: <span className="text-white">Metric</span>
        </span>
        <a href="#" className="ml-auto text-[12px] font-normal text-[#f36e21]">
          www.<span className="text-white">ideastatica</span> .com
        </a>
      </div>
    </footer>
  );
}

export default function App() {
  return (
    <div className="min-h-screen flex flex-col bg-[#e0d9d7] font-['Open_Sans','Noto_Sans',sans-serif] text-[12px]">
      <div className="flex-1 flex">
        <div className="w-[8px] shrink-0 bg-[#f7f7f7]">
          <div className="h-[32px] bg-[#e6e6e6]" />
        </div>
        <div className="flex-1 min-w-0 flex flex-col">
          <Header />
          <Ribbon />
          <main className="flex-1 grid grid-cols-[1162fr_5px_753fr] bg-white">
            <section className="min-w-0">
              <ViewToolbar />
              <div className="flex items-start">
                <div className="w-[262px] shrink-0">
                  <CheckSummary />
                  <StressLegend />
                </div>
                <div className="flex-1 min-w-0 pt-[88px]">
                  <ModelCanvas />
                </div>
                <CombinationTree />
              </div>
            </section>
            <div className="bg-[#cccccc] border-x border-[#bbbbbb]" />
            <ResultsPanel />
          </main>
          <StatusBar />
        </div>
      </div>
      <div className="flex items-end h-[8px] border-t border-[#b8b2b0] pl-[1106px]">
        <span className="flex justify-center w-[38px] h-[5px] rounded-t-[2px] bg-[#ffe0e0]">
          <span className="self-end w-[7px] h-[2px] ml-[18px] bg-[#c83030]" />
        </span>
        <span className="w-[37px] h-[4px] ml-[226px] rounded-t-[2px] bg-[#efecea]" />
      </div>
    </div>
  );
}
